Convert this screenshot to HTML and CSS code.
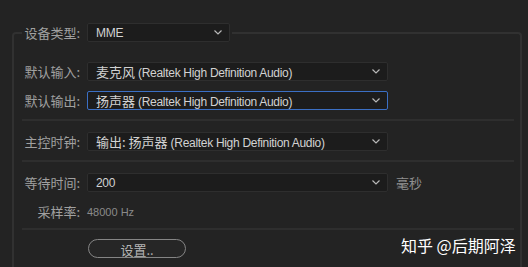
FILE: index.html
```html
<!DOCTYPE html>
<html lang="zh-CN">

<head>
    <meta charset="UTF-8">
    <title>音频硬件</title>
    <link rel="stylesheet" href="styles.css">
</head>

<body>

    <fieldset class="group">
        <legend class="row">
            <span class="label">设备类型:</span>
            <div class="select short">
                <span class="value">MME</span>
                <svg class="chevron" viewBox="0 0 8 5"><polyline points="0.5,0.5 4,4 7.5,0.5" /></svg>
            </div>
        </legend>

        <div class="row">
            <span class="label">默认输入:</span>
            <div class="select">
                <span class="value"><span class="cjk">麦克风</span> (Realtek High Definition Audio)</span>
                <svg class="chevron" viewBox="0 0 8 5"><polyline points="0.5,0.5 4,4 7.5,0.5" /></svg>
            </div>
        </div>

        <div class="row gap-top">
            <span class="label">默认输出:</span>
            <div class="select focused">
                <span class="value"><span class="cjk">扬声器</span> (Realtek High Definition Audio)</span>
                <svg class="chevron" viewBox="0 0 8 5"><polyline points="0.5,0.5 4,4 7.5,0.5" /></svg>
            </div>
        </div>

        <div class="separator"></div>

        <div class="row">
            <span class="label">主控时钟:</span>
            <div class="select">
                <span class="value"><span class="cjk">输出: 扬声器</span> (Realtek High Definition Audio)</span>
                <svg class="chevron" viewBox="0 0 8 5"><polyline points="0.5,0.5 4,4 7.5,0.5" /></svg>
            </div>
        </div>

        <div class="separator"></div>

        <div class="row">
            <span class="label">等待时间:</span>
            <div class="select">
                <span class="value">200</span>
                <svg class="chevron" viewBox="0 0 8 5"><polyline points="0.5,0.5 4,4 7.5,0.5" /></svg>
            </div>
            <span class="unit">毫秒</span>
        </div>

        <div class="row gap-top">
            <span class="label">采样率:</span>
            <span class="info">48000 Hz</span>
        </div>

        <div class="separator short-gap"></div>

        <div class="row button-row">
            <button class="pill">设置..</button>
        </div>
    </fieldset>

    <!-- watermark sits over the panel -->
    <div class="watermark">知乎 @后期阿泽</div>

</body>

</html>
```

FILE: styles.css
```css
body {
    margin: 0;
    width: 528px;
    height: 267px;
    overflow: hidden;
    position: relative;
    background-color: #232323;
    font-family: "Liberation Sans", "Noto Sans CJK SC", sans-serif;
    color: #a3a3a3;
}

.group {
    margin: 23px 0 0 12px;
    width: 510px;
    height: 244px;
    box-sizing: border-box;
    padding: 20px 6px 0 8px;
    border: 2px solid #313131;
    border-bottom: none;
    border-radius: 4px 4px 0 0;
}

.group legend {
    padding: 0 2px 0 0;
    margin-left: 0;
    background-color: #232323;
}

.row {
    display: flex;
    align-items: center;
    height: 19px;
}

.gap-top {
    margin-top: 10px;
}

.label {
    width: 58px;
    text-align: right;
    margin-right: 7px;
    font-family: "Noto Sans CJK SC", sans-serif;
    font-size: 13px;
    color: #a0a0a0;
    flex-shrink: 0;
}

.select {
    width: 301px;
    height: 19px;
    box-sizing: border-box;
    display: flex;
    align-items: center;
    justify-content: space-between;
    padding: 0 7px 0 8px;
    background-color: #1c1c1c;
    border: 1px solid #2e2e2e;
    border-radius: 2px;
}

.select.short {
    width: 143px;
}

.select.focused {
    border-color: #3b6fc4;
}

.value {
    font-size: 12px;
    letter-spacing: -0.3px;
    color: #d2d2d2;
    white-space: nowrap;
}

.cjk {
    font-family: "Noto Sans CJK SC", sans-serif;
    font-size: 13px;
    letter-spacing: 0;
}

.chevron {
    width: 8px;
    height: 5px;
    fill: none;
    stroke: #b8b8b8;
    stroke-width: 1.2;
}

.unit {
    margin-left: 8px;
    font-family: "Noto Sans CJK SC", sans-serif;
    font-size: 13px;
    color: #8f8f8f;
}

.info {
    font-size: 11px;
    color: #8a8a8a;
}

.separator {
    height: 2px;
    background-color: #2e2e2e;
    margin: 9px 0 11px;
}

.separator.short-gap {
    margin: 7px 0 9px;
}

.button-row {
    padding-left: 66px;
}

.pill {
    width: 98px;
    height: 19px;
    padding: 0;
    background-color: #262626;
    border: 1px solid #858585;
    border-radius: 10px;
    font-family: "Noto Sans CJK SC", sans-serif;
    font-size: 13px;
    color: #b5b5b5;
}

.watermark {
    position: absolute;
    left: 401px;
    top: 233px;
    font-family: "Noto Sans CJK SC", sans-serif;
    font-size: 16px;
    color: #ffffff;
    white-space: nowrap;
}
```
